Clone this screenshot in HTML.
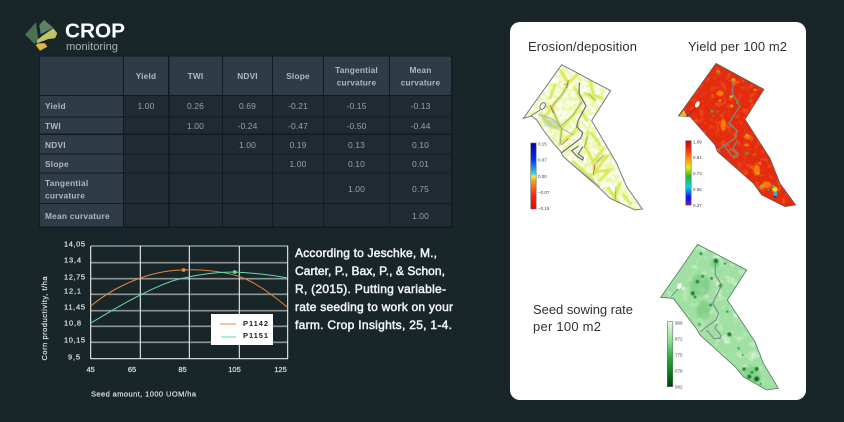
<!DOCTYPE html>
<html><head><meta charset="utf-8"><style>
html,body{margin:0;padding:0;background:#18262a;width:844px;height:422px;overflow:hidden}
svg{display:block}
text{font-family:"Liberation Sans",sans-serif}
.h{font-size:8.300px;font-weight:bold;fill:#aeb8be;text-anchor:middle;letter-spacing:.2px}
.l{font-size:8.300px;font-weight:bold;fill:#aeb8be;letter-spacing:.25px}
.d{font-size:8.500px;fill:#98a2a9;text-anchor:middle;letter-spacing:.1px}
.t{font-size:12px;fill:#f2f4f4;stroke:#f2f4f4;stroke-width:.5px}
.c{font-size:7.500px;fill:#d8dcdc;stroke:#d8dcdc;stroke-width:.25px}
.ct{font-size:13px;fill:#2d3236}
.b{font-size:4.500px;fill:#444}
</style></head><body>
<svg width="844" height="422" viewBox="0 0 844 422" xmlns="http://www.w3.org/2000/svg">
<defs>
<filter id="b1" x="-20%" y="-20%" width="140%" height="140%"><feGaussianBlur stdDeviation="1.200"/></filter>
<filter id="b2" x="-20%" y="-20%" width="140%" height="140%"><feGaussianBlur stdDeviation="3"/></filter>
<filter id="nr" x="0" y="0" width="100%" height="100%"><feTurbulence type="fractalNoise" baseFrequency="0.045" numOctaves="3" seed="4"/><feColorMatrix values="0 0 0 0 0.68  0 0 0 0 0.04  0 0 0 0 0.02  1.900 0 0 0 -0.800"/></filter>
<filter id="no" x="0" y="0" width="100%" height="100%"><feTurbulence type="fractalNoise" baseFrequency="0.06" numOctaves="3" seed="9"/><feColorMatrix values="0 0 0 0 0.98  0 0 0 0 0.42  0 0 0 0 0.03  2.200 0 0 0 -1.150"/></filter>
<filter id="ng" x="0" y="0" width="100%" height="100%"><feTurbulence type="fractalNoise" baseFrequency="0.04" numOctaves="3" seed="12"/><feColorMatrix values="0 0 0 0 0.90  0 0 0 0 0.97  0 0 0 0 0.88  2.800 0 0 0 -1.450"/></filter>
<filter id="ny" x="0" y="0" width="100%" height="100%"><feTurbulence type="fractalNoise" baseFrequency="0.07" numOctaves="4" seed="21"/><feColorMatrix values="0 0 0 0 0.84  0 0 0 0 0.92  0 0 0 0 0.36  6 0 0 0 -2.600"/></filter>
<linearGradient id="g1" x1="0" y1="0" x2="0" y2="1"><stop offset="0" stop-color="#0000a8"/><stop offset=".25" stop-color="#0030ff"/><stop offset=".42" stop-color="#20b8e8"/><stop offset=".48" stop-color="#50e0d0"/><stop offset=".5" stop-color="#f4ee30"/><stop offset=".58" stop-color="#ff9a10"/><stop offset=".8" stop-color="#ff2010"/><stop offset="1" stop-color="#f00000"/></linearGradient>
<linearGradient id="g2" x1="0" y1="0" x2="0" y2="1"><stop offset="0" stop-color="#b01010"/><stop offset=".12" stop-color="#f02010"/><stop offset=".3" stop-color="#ff9a10"/><stop offset=".42" stop-color="#e8e820"/><stop offset=".55" stop-color="#30b030"/><stop offset=".72" stop-color="#10d0e0"/><stop offset=".88" stop-color="#1010e0"/><stop offset="1" stop-color="#7020a0"/></linearGradient>
<linearGradient id="g3" x1="0" y1="0" x2="0" y2="1"><stop offset="0" stop-color="#e8f8e4"/><stop offset=".3" stop-color="#90dc90"/><stop offset=".55" stop-color="#30a838"/><stop offset=".8" stop-color="#0a7a18"/><stop offset="1" stop-color="#003c08"/></linearGradient>
<clipPath id="ce"><path d="M155 104L302 182L245 272L320 400L350 470L397 537L375 540L300 505L275 480L160 380L152 365L130 340L100 300L80 270L65 258L40 265Z"/></clipPath>
<clipPath id="cy"><path d="M168 100L312 178L255 268L330 385L360 460L407 525L375 530L305 495L280 460L172 365L165 345L90 260L55 258Z"/></clipPath>
<clipPath id="cs"><path d="M173 28L320 105L262 195L345 320L370 385L415 460L380 465L310 425L285 395L180 300L172 285L100 190L62 187Z"/></clipPath>
</defs>

<rect width="844" height="422" fill="#18262a"/>

<!-- logo -->
<path d="M25 34.500L36 22.300L38.300 40L34.500 44Z" fill="#4c7150"/>
<path d="M39.300 25L44 19.700L53.300 27.700L40.700 34.300Z" fill="#5c8266"/>
<path d="M57.300 33.300L53.300 28.300L48.300 31.700L43.300 35L37.300 40L36.700 43.300L43.300 41L48.300 39L55 38.300Z" fill="#c0c463"/>
<path d="M35.700 45L38.300 43.300L45 43.300L47.300 46.700L40 50.700Z" fill="#e0b744"/>
<text x="65" y="37.500" font-size="20.500" font-weight="bold" fill="#fff" textLength="60" lengthAdjust="spacingAndGlyphs">CROP</text>
<text x="66" y="50" font-size="11" fill="#a9b1b3" textLength="52" lengthAdjust="spacingAndGlyphs">monitoring</text>

<!-- table -->
<rect x="39" y="55.500" width="413.500" height="172.500" fill="#131b22"/>
<g fill="#303b48">
<rect x="40" y="56.500" width="83" height="38.500"/><rect x="124" y="56.500" width="44" height="38.500"/><rect x="169.500" y="56.500" width="52.500" height="38.500"/><rect x="223" y="56.500" width="49" height="38.500"/><rect x="273" y="56.500" width="50" height="38.500"/><rect x="324" y="56.500" width="65" height="38.500"/><rect x="390" y="56.500" width="61" height="38.500"/>
<rect x="40" y="96" width="83" height="20.500"/><rect x="40" y="117.500" width="83" height="16"/><rect x="40" y="135" width="83" height="18.500"/><rect x="40" y="154.500" width="83" height="18"/><rect x="40" y="173.500" width="83" height="29.500"/><rect x="40" y="204" width="83" height="22.500"/>
</g>
<g fill="#212933">
<rect x="124" y="96" width="44" height="20.500"/><rect x="169.500" y="96" width="52.500" height="20.500"/><rect x="223" y="96" width="49" height="20.500"/><rect x="273" y="96" width="50" height="20.500"/><rect x="324" y="96" width="65" height="20.500"/><rect x="390" y="96" width="61" height="20.500"/>
<rect x="124" y="117.500" width="44" height="16"/><rect x="169.500" y="117.500" width="52.500" height="16"/><rect x="223" y="117.500" width="49" height="16"/><rect x="273" y="117.500" width="50" height="16"/><rect x="324" y="117.500" width="65" height="16"/><rect x="390" y="117.500" width="61" height="16"/>
<rect x="124" y="135" width="44" height="18.500"/><rect x="169.500" y="135" width="52.500" height="18.500"/><rect x="223" y="135" width="49" height="18.500"/><rect x="273" y="135" width="50" height="18.500"/><rect x="324" y="135" width="65" height="18.500"/><rect x="390" y="135" width="61" height="18.500"/>
<rect x="124" y="154.500" width="44" height="18"/><rect x="169.500" y="154.500" width="52.500" height="18"/><rect x="223" y="154.500" width="49" height="18"/><rect x="273" y="154.500" width="50" height="18"/><rect x="324" y="154.500" width="65" height="18"/><rect x="390" y="154.500" width="61" height="18"/>
<rect x="124" y="173.500" width="44" height="29.500"/><rect x="169.500" y="173.500" width="52.500" height="29.500"/><rect x="223" y="173.500" width="49" height="29.500"/><rect x="273" y="173.500" width="50" height="29.500"/><rect x="324" y="173.500" width="65" height="29.500"/><rect x="390" y="173.500" width="61" height="29.500"/>
<rect x="124" y="204" width="44" height="22.500"/><rect x="169.500" y="204" width="52.500" height="22.500"/><rect x="223" y="204" width="49" height="22.500"/><rect x="273" y="204" width="50" height="22.500"/><rect x="324" y="204" width="65" height="22.500"/><rect x="390" y="204" width="61" height="22.500"/>
</g>
<text class="h" x="146" y="79">Yield</text><text class="h" x="195.500" y="79">TWI</text><text class="h" x="247.500" y="79">NDVI</text><text class="h" x="298" y="79">Slope</text>
<text class="h" x="356.500" y="73">Tangential</text><text class="h" x="356.500" y="85.500">curvature</text>
<text class="h" x="420.500" y="73">Mean</text><text class="h" x="420.500" y="85.500">curvature</text>
<text class="l" x="45" y="109">Yield</text><text class="l" x="45" y="129">TWI</text><text class="l" x="45" y="148">NDVI</text><text class="l" x="45" y="167">Slope</text>
<text class="l" x="45" y="186">Tangential</text><text class="l" x="45" y="198.500">curvature</text><text class="l" x="45" y="219">Mean curvature</text>

<text class="d" x="146" y="109">1.00</text><text class="d" x="195.500" y="109">0.26</text><text class="d" x="247.500" y="109">0.69</text><text class="d" x="298" y="109">-0.21</text><text class="d" x="356.500" y="109">-0.15</text><text class="d" x="420.500" y="109">-0.13</text>
<text class="d" x="195.500" y="129">1.00</text><text class="d" x="247.500" y="129">-0.24</text><text class="d" x="298" y="129">-0.47</text><text class="d" x="356.500" y="129">-0.50</text><text class="d" x="420.500" y="129">-0.44</text>
<text class="d" x="247.500" y="148">1.00</text><text class="d" x="298" y="148">0.19</text><text class="d" x="356.500" y="148">0.13</text><text class="d" x="420.500" y="148">0.10</text>
<text class="d" x="298" y="167">1.00</text><text class="d" x="356.500" y="167">0.10</text><text class="d" x="420.500" y="167">0.01</text>
<text class="d" x="356.500" y="192">1.00</text><text class="d" x="420.500" y="192">0.75</text>
<text class="d" x="420.500" y="219">1.00</text>

<!-- chart -->
<path d="M91 246H288M91 262.700H288M91 278.700H288M91 294.300H288M91 310.700H288M91 326.300H288M91 342.300H288" stroke="#8e9393" stroke-width="1.600"/>
<path d="M90.700 358.700H288" stroke="#e8e8e8" stroke-width="1.200"/>
<path d="M90.700 246V359M140.300 246V359M189.300 246V359M239.300 246V359M287.700 246V359" stroke="#fff" stroke-width="1"/>
<path d="M90.700 306C108 292 122 285 140.300 278C160 271 175 270 184 270C205 269 225 272 239.300 276.500C255 282 270 293 287.700 307.500" fill="none" stroke="#e8873e" stroke-width="1"/>
<path d="M90.700 323C108 313 122 304 140.300 295C158 286 172 280 184 278C205 273 222 272 234.500 272C255 273 272 275 287.700 278" fill="none" stroke="#62dca6" stroke-width="1"/>
<rect x="181.800" y="268.300" width="3.500" height="3.500" rx="1" fill="#e8873e"/>
<rect x="233" y="270.300" width="3.500" height="3.500" rx="1" fill="#62dca6"/>
<rect x="211" y="314" width="62" height="31" fill="#fff"/>
<path d="M220 324H236" stroke="#e8873e" stroke-width="1"/><path d="M221 337H236" stroke="#62dca6" stroke-width="1"/>
<text x="243" y="326" font-size="7.500" font-weight="bold" fill="#222" textLength="25">P1142</text>
<text x="243" y="338" font-size="7.500" font-weight="bold" fill="#222" textLength="25">P1151</text>
<text class="c" x="64" y="246.500" textLength="21">14,05</text><text class="c" x="64" y="262.500" textLength="17">13,4</text><text class="c" x="64" y="279.500" textLength="21">12,75</text><text class="c" x="64" y="293.500" textLength="17">12,1</text><text class="c" x="64" y="309.500" textLength="21">11,45</text><text class="c" x="64" y="325.500" textLength="17">10,8</text><text class="c" x="64" y="342.500" textLength="21">10,15</text><text class="c" x="68" y="359.500" textLength="12">9,5</text>
<text class="c" x="90.700" y="372" text-anchor="middle">45</text><text class="c" x="132" y="372" text-anchor="middle">65</text><text class="c" x="182.500" y="372" text-anchor="middle">85</text><text class="c" x="234.500" y="372" text-anchor="middle">105</text><text class="c" x="280.500" y="372" text-anchor="middle">125</text>
<text class="c" x="91" y="396.500" textLength="105">Seed amount, 1000 UOM/ha</text>
<text class="c" transform="translate(47 360.500) rotate(-90)" textLength="84">Corn productivity, t/ha</text>

<!-- paragraph -->
<text class="t" x="295" y="257" textLength="142">According to Jeschke, M.,</text>
<text class="t" x="295" y="275" textLength="150">Carter, P., Bax, P., &amp; Schon,</text>
<text class="t" x="295" y="293" textLength="151">R, (2015). Putting variable-</text>
<text class="t" x="295" y="311" textLength="158">rate seeding to work on your</text>
<text class="t" x="295" y="329" textLength="157">farm. Crop Insights, 25, 1-4.</text>

<!-- card -->
<rect x="510" y="22" width="296" height="378" rx="10" fill="#fff"/>
<text class="ct" x="528" y="51" textLength="109">Erosion/deposition</text>
<text class="ct" x="688" y="51" textLength="99">Yield per 100 m2</text>
<text class="ct" x="533" y="314" textLength="100">Seed sowing rate</text>
<text class="ct" x="533" y="331" textLength="68">per 100 m2</text>

<!-- erosion map -->
<g transform="translate(510 30) scale(.33333)">
<path d="M155 104L302 182L245 272L320 400L350 470L397 537L375 540L300 505L275 480L160 380L152 365L130 340L100 300L80 270L65 258L40 265Z" fill="#fbfdf2"/>
<g clip-path="url(#ce)">
<rect x="30" y="95" width="380" height="455" filter="url(#ny)" opacity=".9"/>
<g fill="none" stroke="#d9ea58" stroke-width="9" stroke-linecap="round" filter="url(#b1)">
<path d="M150 120L175 160L160 190L125 230L140 270L155 295L190 255L215 215L195 175"/>
<path d="M95 225L125 235L100 265L130 290L155 295L150 340L190 310L205 285M135 165L120 205M175 160L205 130"/>
<path d="M240 150L250 195L275 205M225 190L255 210M230 270L215 245"/>
<path d="M235 305L225 350L250 395L255 430L235 440M280 355L250 395L290 380L255 425L300 420L270 450M245 310L270 345"/>
<path d="M330 460L315 500M295 475L325 515M340 495L360 520M190 395L250 450M235 445L265 480"/>
</g>
<g fill="none" stroke="#7fa39a" stroke-width="2.500" opacity=".85">
<path d="M160 165L175 160L155 195L125 230L150 290L190 255L215 215"/>
<path d="M85 255L125 265L155 295L150 345M155 295L190 315"/>
<path d="M255 210L235 190M232 320L222 355M280 375L255 405L250 435M318 470L315 510"/>
<path d="M165 385L220 430L270 470"/>
</g>
<g fill="none" stroke="#c8553a" stroke-width="2">
<path d="M175 150L170 175M120 225L130 250M255 405L250 430M175 325L155 345"/>
</g>
<path d="M90 245C110 262 130 265 150 280L145 300L105 290Z" fill="#a9c79b" opacity=".5" filter="url(#b1)"/>
</g>
<path d="M155 104L302 182L245 272L320 400L350 470L397 537L375 540L300 505L275 480L160 380L152 365L130 340L100 300L80 270L65 258L40 265Z" fill="none" stroke="#6f7f8c" stroke-width="3"/>
<path d="M208 158L207 190L228 228L205 270L200 290L218 308L212 325L155 368M206 348L185 362L200 378L218 390L220 383L205 372L218 350" fill="none" stroke="#5f6f7c" stroke-width="3.500"/>
<ellipse cx="98" cy="228" rx="7" ry="11" transform="rotate(30 98 228)" fill="#fff" stroke="#5f6f7c" stroke-width="3"/>
<path d="M62 258L90 240" stroke="#5f6f7c" stroke-width="2.500"/>
</g>
<rect x="530.700" y="143" width="5.500" height="66" fill="url(#g1)" stroke="#6a7070" stroke-width=".6"/>
<text class="b" x="538" y="145.500">0.15</text><text class="b" x="538" y="161.500">0.07</text><text class="b" x="538" y="178">0.00</text><text class="b" x="538" y="194">−0.07</text><text class="b" x="538" y="210">−0.15</text>

<!-- yield map -->
<g transform="translate(660 30) scale(.33333)">
<path d="M168 100L312 178L255 268L330 385L360 460L407 525L375 530L305 495L280 460L172 365L165 345L90 260L55 258Z" fill="#e62a0c"/>
<g clip-path="url(#cy)">
<rect x="40" y="90" width="380" height="450" filter="url(#no)" opacity=".6"/>
<rect x="40" y="90" width="380" height="450" filter="url(#nr)" opacity=".7"/>
<g fill="#ff8a10" filter="url(#b1)" opacity=".85">
<ellipse cx="180" cy="190" rx="11" ry="8"/><ellipse cx="190" cy="285" rx="8" ry="18"/><ellipse cx="262" cy="320" rx="10" ry="7"/><ellipse cx="290" cy="420" rx="10" ry="16"/><ellipse cx="260" cy="345" rx="8" ry="5"/><ellipse cx="320" cy="465" rx="14" ry="10"/>
</g>
<g fill="#e8e030" filter="url(#b1)">
<circle cx="220" cy="150" r="5"/><circle cx="214" cy="200" r="4"/><circle cx="176" cy="125" r="3"/><circle cx="262" cy="315" r="3"/><circle cx="300" cy="400" r="3"/><circle cx="295" cy="430" r="3"/><circle cx="215" cy="228" r="4"/><circle cx="180" cy="212" r="3"/><circle cx="285" cy="180" r="3"/><circle cx="345" cy="478" r="8"/><circle cx="305" cy="470" r="5"/>
</g>
<g fill="#38b040">
<circle cx="176" cy="126" r="2.500"/><circle cx="156" cy="244" r="4"/><circle cx="174" cy="245" r="3"/><circle cx="160" cy="258" r="3"/><circle cx="262" cy="370" r="4"/><circle cx="250" cy="154" r="3"/><circle cx="232" cy="218" r="4"/><circle cx="305" cy="470" r="3"/><circle cx="325" cy="480" r="3"/><circle cx="205" cy="280" r="3"/><circle cx="340" cy="468" r="4"/>
</g>
<g fill="#18c8d8"><circle cx="346" cy="492" r="6"/><circle cx="340" cy="468" r="2.500"/><circle cx="156" cy="244" r="2"/></g>
<circle cx="345" cy="500" r="3" fill="#1020d0"/>
<path d="M168 100L312 178" stroke="#30a060" stroke-width="3" fill="none"/>
</g>
<path d="M168 100L312 178L255 268L330 385L360 460L407 525L375 530L305 495L280 460L172 365L165 345L90 260L55 258Z" fill="none" stroke="#59595c" stroke-width="2"/>
<path d="M220 148L217 190L240 228L218 262L208 280L232 302L225 325L170 362M192 345L215 378L232 381L235 370L217 358L233 330" fill="none" stroke="#7d8b8b" stroke-width="3.500"/>
<ellipse cx="112" cy="223" rx="6" ry="10" transform="rotate(30 112 223)" fill="#fff"/>
<path d="M80 258L108 235" stroke="#444" stroke-width="2"/>
<path d="M58 258L72 240L80 258Z" fill="#cfc820"/>
</g>
<rect x="685.700" y="140.700" width="5.500" height="64.500" fill="url(#g2)" stroke="#6a7070" stroke-width=".6"/>
<text class="b" x="693" y="143.500">1.09</text><text class="b" x="693" y="159">0.91</text><text class="b" x="693" y="175">0.73</text><text class="b" x="693" y="191">0.55</text><text class="b" x="693" y="207">0.37</text>

<!-- seed map -->
<g transform="translate(640 235) scale(.33333)">
<path d="M173 28L320 105L262 195L345 320L370 385L415 460L380 465L310 425L285 395L180 300L172 285L100 190L62 187Z" fill="#a0e0a2"/>
<g clip-path="url(#cs)">
<rect x="50" y="20" width="380" height="450" filter="url(#ng)" opacity=".7"/>
<g fill="#6cc474" filter="url(#b2)" opacity=".55">
<ellipse cx="180" cy="150" rx="30" ry="32"/><ellipse cx="190" cy="225" rx="20" ry="28"/><ellipse cx="330" cy="420" rx="34" ry="26"/><ellipse cx="225" cy="85" rx="12" ry="14"/>
</g>
<g fill="#137f28" filter="url(#b1)">
<circle cx="183" cy="56" r="4"/><circle cx="228" cy="78" r="7"/><circle cx="255" cy="86" r="3"/><circle cx="172" cy="140" r="5"/><circle cx="188" cy="124" r="4"/><circle cx="158" cy="175" r="6"/><circle cx="165" cy="186" r="4"/><circle cx="215" cy="130" r="4"/><circle cx="242" cy="152" r="5"/><circle cx="212" cy="210" r="4"/><circle cx="178" cy="268" r="3"/><circle cx="268" cy="298" r="6"/><circle cx="262" cy="230" r="3"/><circle cx="296" cy="340" r="3"/><circle cx="308" cy="360" r="3"/><circle cx="312" cy="402" r="5"/><circle cx="328" cy="425" r="6"/><circle cx="350" cy="402" r="6"/><circle cx="350" cy="432" r="8"/><circle cx="336" cy="412" r="4"/><circle cx="362" cy="447" r="3"/>
</g>
<circle cx="350" cy="432" r="3" fill="#04500f"/>
</g>
<path d="M173 28L320 105L262 195L345 320L370 385L415 460L380 465L310 425L285 395L180 300L172 285L100 190L62 187Z" fill="none" stroke="#4f7f5f" stroke-width="2.500"/>
<path d="M226 85L226 120L245 150L218 205L236 235L228 255L180 290M200 285L222 311L240 310L242 300L225 280L232 265" fill="none" stroke="#7d8f95" stroke-width="3.500"/>
<ellipse cx="118" cy="153" rx="6" ry="10" transform="rotate(30 118 153)" fill="#fff"/>
<path d="M93 185L114 162" stroke="#4f7f5f" stroke-width="2"/>
</g>
<rect x="667.300" y="321.700" width="5.500" height="65" fill="url(#g3)" stroke="#6a7070" stroke-width=".6"/>
<text class="b" x="675" y="324.500">969</text><text class="b" x="675" y="340.500">872</text><text class="b" x="675" y="356.500">775</text><text class="b" x="675" y="372.500">678</text><text class="b" x="675" y="388.500">582</text>
</svg>
</body></html>
